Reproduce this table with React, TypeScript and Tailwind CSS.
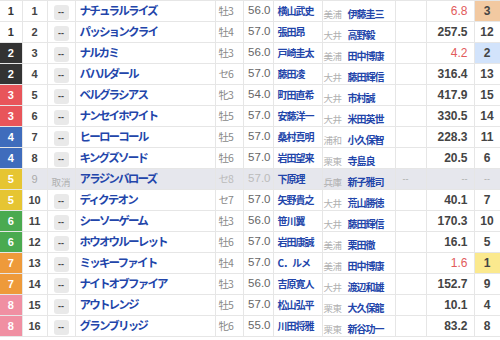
import React from 'react';

type Row = {
  waku: number;
  num: number;
  name: string;
  sex: string;
  kg: string;
  jockey: string;
  region: string;
  trainer: string;
  odds: string;
  pop: string;
  scratched?: boolean;
};

const rows: Row[] = [
  { waku: 1, num: 1, name: 'ナチュラルライズ', sex: '牡3', kg: '56.0', jockey: '横山武史', region: '美浦', trainer: '伊藤圭三', odds: '6.8', pop: '3' },
  { waku: 1, num: 2, name: 'パッションクライ', sex: '牡4', kg: '57.0', jockey: '張田昂', region: '大井', trainer: '高野毅', odds: '257.5', pop: '12' },
  { waku: 2, num: 3, name: 'ナルカミ', sex: '牡3', kg: '56.0', jockey: '戸崎圭太', region: '美浦', trainer: '田中博康', odds: '4.2', pop: '2' },
  { waku: 2, num: 4, name: 'バハルダール', sex: 'セ6', kg: '57.0', jockey: '藤田凌', region: '大井', trainer: '藤田輝信', odds: '316.4', pop: '13' },
  { waku: 3, num: 5, name: 'ベルグラシアス', sex: '牝3', kg: '54.0', jockey: '町田直希', region: '大井', trainer: '市村誠', odds: '417.9', pop: '15' },
  { waku: 3, num: 6, name: 'ナンセイホワイト', sex: '牡5', kg: '57.0', jockey: '安藤洋一', region: '大井', trainer: '米田英世', odds: '330.5', pop: '14' },
  { waku: 4, num: 7, name: 'ヒーローコール', sex: '牡5', kg: '57.0', jockey: '桑村真明', region: '浦和', trainer: '小久保智', odds: '228.3', pop: '11' },
  { waku: 4, num: 8, name: 'キングズソード', sex: '牡6', kg: '57.0', jockey: '岩田望来', region: '栗東', trainer: '寺島良', odds: '20.5', pop: '6' },
  { waku: 5, num: 9, name: 'アラジンバローズ', sex: 'セ8', kg: '57.0', jockey: '下原理', region: '兵庫', trainer: '新子雅司', odds: '--', pop: '--', scratched: true },
  { waku: 5, num: 10, name: 'ディクテオン', sex: 'セ7', kg: '57.0', jockey: '矢野貴之', region: '大井', trainer: '荒山勝徳', odds: '40.1', pop: '7' },
  { waku: 6, num: 11, name: 'シーソーゲーム', sex: '牡3', kg: '56.0', jockey: '笹川翼', region: '大井', trainer: '藤田輝信', odds: '170.3', pop: '10' },
  { waku: 6, num: 12, name: 'ホウオウルーレット', sex: '牡6', kg: '57.0', jockey: '岩田康誠', region: '美浦', trainer: '栗田徹', odds: '16.1', pop: '5' },
  { waku: 7, num: 13, name: 'ミッキーファイト', sex: '牡4', kg: '57.0', jockey: 'C．ルメ', region: '美浦', trainer: '田中博康', odds: '1.6', pop: '1' },
  { waku: 7, num: 14, name: 'ナイトオブファイア', sex: '牡3', kg: '56.0', jockey: '吉原寛人', region: '大井', trainer: '渡辺和雄', odds: '152.7', pop: '9' },
  { waku: 8, num: 15, name: 'アウトレンジ', sex: '牡5', kg: '57.0', jockey: '松山弘平', region: '栗東', trainer: '大久保龍', odds: '10.1', pop: '4' },
  { waku: 8, num: 16, name: 'グランブリッジ', sex: '牝6', kg: '55.0', jockey: '川田将雅', region: '栗東', trainer: '新谷功一', odds: '83.2', pop: '8' },
];

const wakuStyle: Record<number, string> = {
  1: 'bg-white text-[#333]',
  2: 'bg-[#333333] text-white',
  3: 'bg-[#e8555a] text-white',
  4: 'bg-[#3f6cbc] text-white',
  5: 'bg-[#e6c532] text-white',
  6: 'bg-[#4aaa50] text-white',
  7: 'bg-[#ee9a3a] text-white',
  8: 'bg-[#f08fa2] text-white',
};

const popBg = (pop: string) => {
  if (pop === '1') return 'bg-[#fbe98e]';
  if (pop === '2') return 'bg-[#d2e3fb]';
  if (pop === '3') return 'bg-[#f2c9a1]';
  return '';
};

const cell = 'border-r border-b border-[#e6e6e6] p-0 h-[21px] whitespace-nowrap overflow-hidden';
const num = { fontFamily: '"Liberation Sans", Arial, sans-serif' };

const App: React.FC = () => {
  return (
    <div className="w-[500px] h-[340px] bg-white overflow-hidden" style={{ fontFamily: '"Noto Sans CJK JP", "Noto Sans", sans-serif' }}>
      <table className="border-collapse table-fixed w-[500px] leading-none border-t border-[#e6e6e6]">
        <colgroup>
          <col className="w-[22px]" />
          <col className="w-[25px]" />
          <col className="w-[28px]" />
          <col className="w-[140px]" />
          <col className="w-[28px]" />
          <col className="w-[30px]" />
          <col className="w-[49px]" />
          <col className="w-[73px]" />
          <col className="w-[31px]" />
          <col className="w-[48px]" />
          <col className="w-[26px]" />
        </colgroup>
        <tbody>
          {rows.map((r) => {
            const s = r.scratched;
            const odd = Number(r.pop) <= 3 && !s;
            return (
              <tr key={r.num} className={s ? 'bg-[#e6e7ed]' : ''}>
                <td style={num} className={`${cell} text-center font-bold text-[11px] ${wakuStyle[r.waku]}`}>{r.waku}</td>
                <td style={num} className={`${cell} text-center text-[11px] ${s ? 'text-[#aaa]' : 'text-[#444] font-bold'}`}>{r.num}</td>
                <td className={`${cell} text-center`}>
                  {s ? (
                    <span className="text-[9.5px] text-[#b0b0b0]">取消</span>
                  ) : (
                    <span className="inline-flex w-[15px] h-[15px] items-center justify-center rounded-[3px] bg-[#e9e9e9] text-[9px] font-bold text-[#444] align-middle" style={num}>--</span>
                  )}
                </td>
                <td className={`${cell} pl-[4px] font-bold text-[11.5px] tracking-[-1.8px] text-[#2245aa]`}>{r.name}</td>
                <td className={`${cell} pl-[3px] text-[10.5px] tracking-[-1px] ${s ? 'text-[#bbb]' : 'text-[#888]'}`}>{r.sex}</td>
                <td style={num} className={`${cell} text-right pr-[2px] text-[11.5px] ${s ? 'text-[#bbb]' : 'text-[#666]'}`}>{r.kg}</td>
                <td className={`${cell} pl-[4px] font-bold text-[10px] tracking-[-1px] text-[#2245aa]`}>
                  {r.jockey}
                </td>
                <td className={`${cell} pl-[1px]`}>
                  <span className="text-[9.5px] tracking-[-0.5px] text-[#b0b0b0] mr-[6px]">{r.region}</span>
                  <span className="font-bold text-[10px] tracking-[-1px] text-[#2245aa]">{r.trainer}</span>
                </td>
                <td className={`${cell} pl-[7px] text-[9px] text-[#aaa]`} style={num}>{s ? '--' : ''}</td>
                <td style={num} className={`${cell} text-right pr-[6px] ${s ? 'text-[#aaa] text-[9px]' : odd ? 'text-[#e25b5b] text-[12px]' : 'text-[#444] font-bold text-[12px]'}`}>{r.odds}</td>
                <td style={num} className={`${cell} text-center ${s ? 'text-[#aaa] text-[9px]' : 'text-[#444] font-bold text-[12px]'} ${popBg(r.pop)}`}>{r.pop}</td>
              </tr>
            );
          })}
        </tbody>
      </table>
    </div>
  );
};

export default App;
